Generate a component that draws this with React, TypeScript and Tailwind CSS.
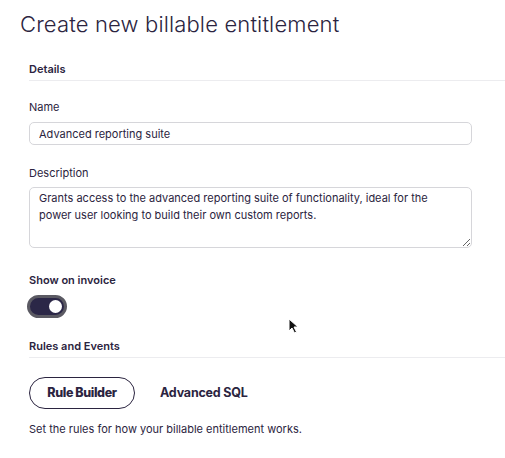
import { useState } from 'react';

export default function App() {
  const [showOnInvoice, setShowOnInvoice] = useState(true);
  const [mode, setMode] = useState<'rule' | 'sql'>('rule');

  return (
    <div
      className="relative h-[458px] w-[505px] overflow-hidden bg-white text-[#2b2440]"
      style={{ fontFamily: 'Inter, "Noto Sans", sans-serif' }}
    >
      <h1 className="pl-5 pt-[8px] text-[22px] font-light leading-[32px] tracking-[0.15px]">
        Create new billable entitlement
      </h1>

      <div className="pl-[29px] pt-[21px]">
        <div className="border-b border-[#ececef] pb-[3px] text-[11px] font-semibold leading-4">Details</div>

        <div className="pr-[33px]">
          <label className="mt-[18px] block text-[11px] leading-4">Name</label>
          <input
            defaultValue="Advanced reporting suite"
            className="mt-[7px] block h-[23px] w-full rounded-[5px] border border-[#d6d6da] px-[9px] text-[11px] text-[#2b2440] outline-none"
          />

          <label className="mt-[20px] block text-[11px] leading-4">Description</label>
          <textarea
            defaultValue="Grants access to the advanced reporting suite of functionality, ideal for the power user looking to build their own custom reports."
            className="mt-[6px] block h-[61px] w-full resize-y rounded-[5px] border border-[#d6d6da] px-[9px] py-[2px] text-[11px] leading-[17px] text-[#2b2440] outline-none"
          />
        </div>

        <div className="mt-[24px] text-[11px] font-semibold leading-4">Show on invoice</div>
        <button
          type="button"
          onClick={() => setShowOnInvoice(!showOnInvoice)}
          className={`ml-[-2px] mt-[7px] flex h-[23px] w-[40px] items-center rounded-full border-[3px] border-[#5b5a63] px-[2px] ${
            showOnInvoice ? 'justify-end bg-[#2b2747]' : 'justify-start bg-[#d9d9de]'
          }`}
        >
          <span className="h-[13px] w-[13px] rounded-full bg-white" />
        </button>

        <div className="mt-[20px] border-b border-[#ececef] pb-[3px] text-[11px] font-semibold leading-4">
          Rules and Events
        </div>

        <div className="mt-[19px] flex items-center gap-[10px]">
          <button
            type="button"
            onClick={() => setMode('rule')}
            className={`h-[32px] w-[106px] rounded-full text-[12.5px] font-extrabold tracking-[-0.4px] ${
              mode === 'rule' ? 'border border-[#2b2440]' : 'border border-transparent'
            }`}
          >
            Rule Builder
          </button>
          <button
            type="button"
            onClick={() => setMode('sql')}
            className={`h-[32px] rounded-full px-[14px] text-[12.5px] font-bold tracking-[-0.2px] ${
              mode === 'sql' ? 'border border-[#2b2440]' : 'border border-transparent'
            }`}
          >
            Advanced SQL
          </button>
        </div>

        <p className="mt-[12px] text-[11px] leading-4">Set the rules for how your billable entitlement works.</p>
      </div>

      {/* mouse pointer captured in the screenshot */}
      <svg className="absolute left-[288px] top-[318px]" width="11" height="16" viewBox="0 0 11 16">
        <path d="M1 1 L1 13 L4 10 L6.5 15 L8.5 14 L6 9 L10 9 Z" fill="#111" stroke="#fff" strokeWidth="1" />
      </svg>
    </div>
  );
}
